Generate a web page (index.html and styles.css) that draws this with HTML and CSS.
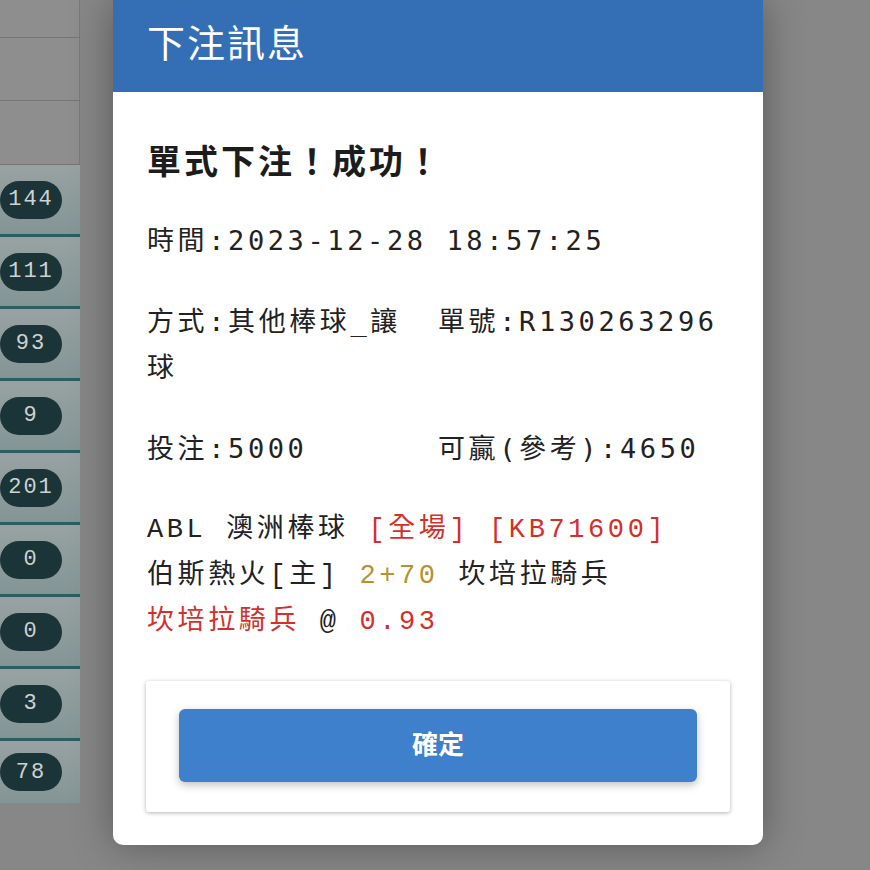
FILE: index.html
```html
<!DOCTYPE html>
<html lang="zh-Hant">
<head>
    <meta charset="UTF-8">
    <meta name="viewport" content="width=device-width, initial-scale=1.0">
    <title>下注訊息</title>
    <link rel="stylesheet" href="styles.css">
</head>
<body>
    <div class="board">
        <div class="cell cell-a"></div>
        <div class="cell cell-b"></div>
        <div class="cell cell-c"></div>
        <div class="row"><span class="count">144</span></div>
        <div class="row"><span class="count">111</span></div>
        <div class="row"><span class="count">93</span></div>
        <div class="row"><span class="count">9</span></div>
        <div class="row"><span class="count">201</span></div>
        <div class="row"><span class="count">0</span></div>
        <div class="row"><span class="count">0</span></div>
        <div class="row"><span class="count">3</span></div>
        <div class="row last"><span class="count">78</span></div>
    </div>

    <div class="dialog">
        <div class="dialog-head">下注訊息</div>
        <div class="dialog-body">
            <h3 class="result">單式下注！成功！</h3>
            <p class="line">時間:2023-12-28 18:57:25</p>
            <div class="pair">
                <div class="half">方式:其他棒球_讓球</div>
                <div class="half">單號:R130263296</div>
            </div>
            <div class="pair">
                <div class="half">投注:5000</div>
                <div class="half">可贏(參考):4650</div>
            </div>
            <p class="line match">
                ABL 澳洲棒球 <span class="red">[全場]</span> <span class="red">[KB71600]</span><br>
                伯斯熱火[主] <span class="gold">2+70</span> 坎培拉騎兵<br>
                <span class="red">坎培拉騎兵</span> @ <span class="red">0.93</span>
            </p>
        </div>
        <div class="dialog-foot">
            <button class="ok">確定</button>
        </div>
    </div>
</body>
</html>
```

FILE: styles.css
```css
body {
    margin: 0;
    background-color: #878787;
    font-family: "Noto Sans CJK TC", sans-serif;
    height: 870px;
    overflow: hidden;
}

/* page behind the mask */
.board {
    width: 80px;
    display: flex;
    flex-direction: column;
}
.cell {
    background-color: #8e8e8e;
    border-bottom: 1px solid #757575;
    border-right: 1px solid #7a7a7a;
}
.cell-a { height: 37px; }
.cell-b { height: 62px; }
.cell-c { height: 63px; }
.row {
    height: 69px;
    display: flex;
    align-items: center;
    background: linear-gradient(#98a2a2, #849595);
    border-bottom: 3px solid #2d5d60;
}
.row.last {
    height: 62px;
    border-bottom: none;
}
.count {
    width: 62px;
    height: 38px;
    border-radius: 19px;
    background-color: #1b3437;
    color: #cfd2d2;
    font-family: "Liberation Mono", monospace;
    font-size: 22px;
    letter-spacing: 2px;
    display: flex;
    align-items: center;
    justify-content: center;
}

/* dialog */
.dialog {
    position: absolute;
    top: 0;
    left: 113px;
    width: 650px;
    height: 845px;
    background-color: #fff;
    border-radius: 0 0 10px 10px;
    box-shadow: 0 0 40px rgba(0,0,0,0.35);
    display: flex;
    flex-direction: column;
}
.dialog-head {
    height: 92px;
    padding-left: 34px;
    background-color: #346fb5;
    color: #fff;
    font-size: 38px;
    letter-spacing: 2px;
    line-height: 82px;
    box-sizing: border-box;
}
.dialog-body {
    padding: 45px 34px 0 34px;
    color: #222;
}
.result {
    margin: 0 0 35px 0;
    font-size: 34px;
    font-weight: bold;
    letter-spacing: 3px;
    line-height: 46px;
    color: #1c1c1c;
}
.line,
.pair {
    margin: 0 0 35px 0;
    font-family: "DejaVu Sans Mono", "Noto Sans CJK TC", monospace;
    font-size: 27px;
    letter-spacing: 3.6px;
    line-height: 46px;
}
.pair {
    display: grid;
    grid-template-columns: 1fr 1fr;
}
.half {
    padding-right: 8px;
}
.match {
    font-family: "Liberation Mono", "Noto Sans CJK TC", monospace;
    margin-bottom: 0;
}
.red {
    color: #d3302b;
}
.gold {
    color: #b8912c;
}
.dialog-foot {
    margin: 36px 33px 0 33px;
    padding: 28px 33px 30px 33px;
    background-color: #fff;
    border-radius: 3px;
    box-shadow: 0 1px 4px rgba(0,0,0,0.3);
}
.ok {
    width: 100%;
    height: 73px;
    border: none;
    border-radius: 6px;
    background-color: #3f80cd;
    color: #fff;
    font-family: "Noto Sans CJK TC", sans-serif;
    font-size: 26px;
    font-weight: bold;
    line-height: 66px;
    padding: 0 0 6px 0;
    box-shadow: 0 3px 8px rgba(0,0,0,0.25);
    cursor: pointer;
}
```
